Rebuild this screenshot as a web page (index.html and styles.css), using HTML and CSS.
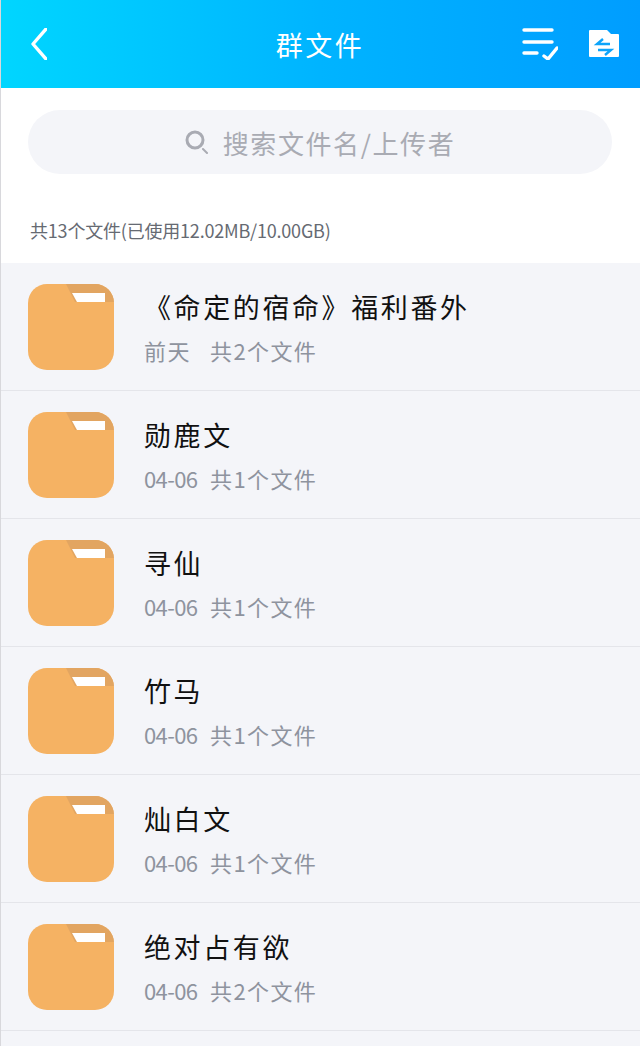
FILE: index.html
```html
<!DOCTYPE html>
<html lang="zh-CN">
<head>
    <meta charset="UTF-8">
    <meta name="viewport" content="width=device-width, initial-scale=1.0">
    <title>群文件</title>
    <link rel="stylesheet" href="styles.css">
</head>
<body>
    <svg class="defs" width="0" height="0">
        <symbol id="folder" viewBox="0 0 86 86">
            <rect width="86" height="86" rx="19" fill="#f5b263"/>
            <path d="M38 0H67A19 19 0 0 1 86 19V18H47Z" fill="#e2a561"/>
            <path d="M44 9H77V18H49Z" fill="#fff"/>
        </symbol>
    </svg>
    <header class="topbar">
        <svg class="back" width="16" height="32" viewBox="0 0 16 32">
            <path d="M15 1 2 16l13 15" fill="none" stroke="#fff" stroke-width="3.4" stroke-linecap="round" stroke-linejoin="round"/>
        </svg>
        <h1>群文件</h1>
        <div class="actions">
            <svg width="36" height="32" viewBox="0 0 36 32" fill="none" stroke="#fff" stroke-width="3.4" stroke-linecap="round" stroke-linejoin="round">
                <path d="M2 2H30M2 14H30M2 25H15"/>
                <path d="M22 28l4 3 9-11"/>
            </svg>
            <svg width="30" height="28" viewBox="0 0 30 28">
                <path d="M0 1a1 1 0 0 1 1-1H18L22 4H29a1 1 0 0 1 1 1V26a1 1 0 0 1-1 1H1a1 1 0 0 1-1-1Z" fill="#fff"/>
                <path d="M21 14H8L14 9M9 20H22L16 25" fill="none" stroke="#0da4fa" stroke-width="2.4"/>
            </svg>
        </div>
    </header>
    <div class="search-wrap">
        <div class="search">
            <svg width="24" height="24" viewBox="0 0 24 24" fill="none" stroke="#a9abb3" stroke-width="3" stroke-linecap="round">
                <circle cx="10" cy="10" r="8"/>
                <path d="M18 19l4 4" stroke-width="2"/>
            </svg>
            <span>搜索文件名/上传者</span>
        </div>
    </div>
    <p class="summary">共13个文件(已使用12.02MB/10.00GB)</p>
    <ul class="files">
        <li class="file">
            <svg class="folder" width="86" height="86"><use href="#folder"/></svg>
            <div>
                <h3>《命定的宿命》福利番外</h3>
                <p><span class="date">前天</span><span>共2个文件</span></p>
            </div>
        </li>
        <li class="file">
            <svg class="folder" width="86" height="86"><use href="#folder"/></svg>
            <div>
                <h3>勋鹿文</h3>
                <p><span class="date num">04-06</span><span>共1个文件</span></p>
            </div>
        </li>
        <li class="file">
            <svg class="folder" width="86" height="86"><use href="#folder"/></svg>
            <div>
                <h3>寻仙</h3>
                <p><span class="date num">04-06</span><span>共1个文件</span></p>
            </div>
        </li>
        <li class="file">
            <svg class="folder" width="86" height="86"><use href="#folder"/></svg>
            <div>
                <h3>竹马</h3>
                <p><span class="date num">04-06</span><span>共1个文件</span></p>
            </div>
        </li>
        <li class="file">
            <svg class="folder" width="86" height="86"><use href="#folder"/></svg>
            <div>
                <h3>灿白文</h3>
                <p><span class="date num">04-06</span><span>共1个文件</span></p>
            </div>
        </li>
        <li class="file">
            <svg class="folder" width="86" height="86"><use href="#folder"/></svg>
            <div>
                <h3>绝对占有欲</h3>
                <p><span class="date num">04-06</span><span>共2个文件</span></p>
            </div>
        </li>
    </ul>
</body>
</html>
```

FILE: styles.css
```css
* {
    box-sizing: border-box;
}
body {
    margin: 0;
    height: 1046px;
    overflow: hidden;
    background: #f4f5f9;
    font-family: "Noto Sans CJK SC", "Noto Sans", sans-serif;
    color: #111;
    border-left: 1px solid #d8d8dc;
}
.defs {
    display: block;
    height: 0;
}
.topbar {
    height: 88px;
    margin-left: -1px;
    display: grid;
    grid-template-columns: 1fr auto 1fr;
    align-items: center;
    padding: 0 21px;
    background: linear-gradient(90deg, #00d6ff 0%, #00b4ff 50%, #009dff 100%);
}
.back {
    margin-left: 10px;
}
.topbar h1 {
    margin: 0;
    font-size: 27px;
    font-weight: 400;
    letter-spacing: 2.5px;
    color: #fff;
}
.actions {
    display: flex;
    align-items: center;
    justify-content: flex-end;
    gap: 31px;
}
.search-wrap {
    background: #fff;
    padding: 22px 28px 0 27px;
}
.search {
    height: 64px;
    border-radius: 32px;
    background: #f4f5f9;
    display: flex;
    align-items: center;
    justify-content: center;
    gap: 14px;
    color: #a9abb3;
    font-size: 26px;
    letter-spacing: 1.6px;
}
.summary {
    margin: 0;
    height: 89px;
    padding: 41px 0 0 29px;
    background: #fff;
    font-size: 18px;
    line-height: 30px;
    letter-spacing: -0.2px;
    color: #666a72;
    white-space: nowrap;
}
.files {
    list-style: none;
    margin: 0;
    padding: 0;
}
.file {
    height: 128px;
    display: flex;
    align-items: center;
    gap: 30px;
    padding: 0 0 0 27px;
    border-bottom: 1px solid #e4e5ea;
}
.file h3 {
    margin: -2px 0 0;
    font-size: 27px;
    font-weight: 400;
    line-height: 40px;
    letter-spacing: 2.6px;
    color: #111;
}
.file p {
    margin: 8px 0 0;
    display: flex;
    font-size: 22px;
    line-height: 30px;
    letter-spacing: 1.4px;
    color: #8e939e;
}
.date {
    width: 66px;
}
.date.num {
    letter-spacing: -0.6px;
}
.folder {
    flex: none;
}
```
